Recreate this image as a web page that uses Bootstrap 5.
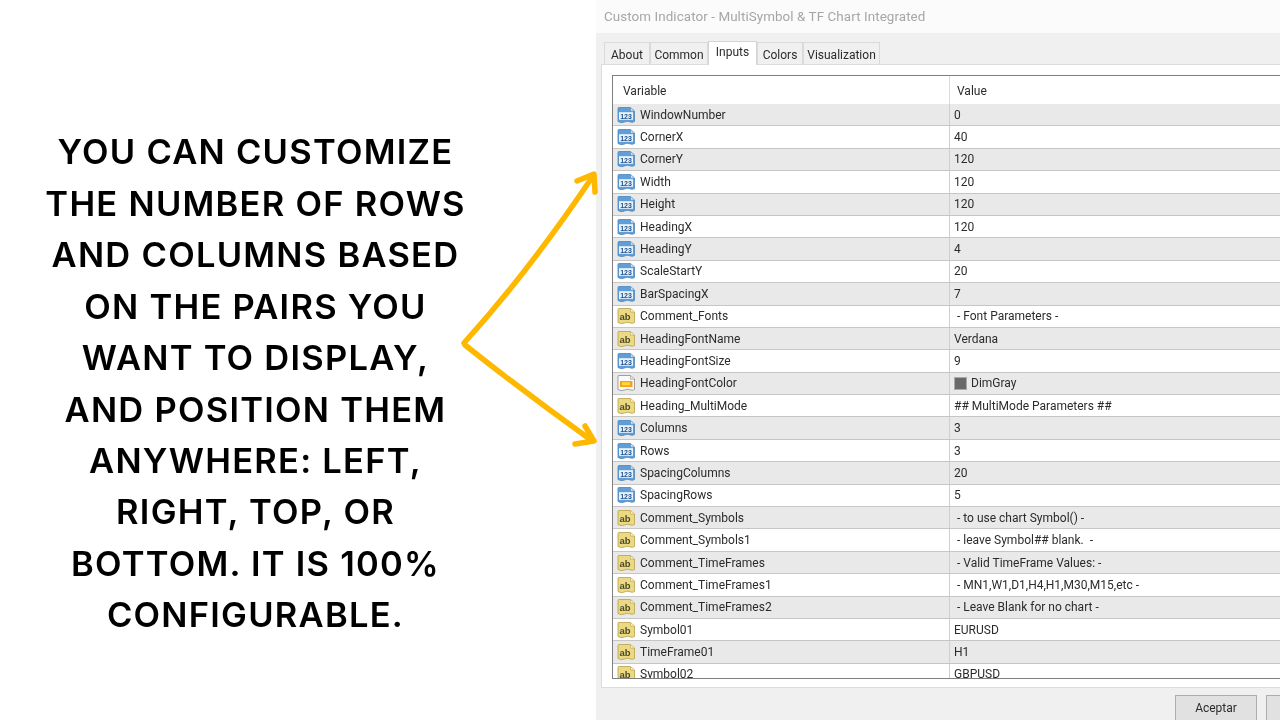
<!DOCTYPE html>
<html lang="en">
<head>
<meta charset="utf-8">
<title>MultiSymbol & TF Chart Integrated</title>
<link href="https://cdn.jsdelivr.net/npm/bootstrap@5.3.0/dist/css/bootstrap.min.css" rel="stylesheet">
<style>
html,body{height:720px;overflow:hidden;background:#fff}
.stage{width:1280px;height:720px;position:relative;overflow:hidden}
.pitch{width:596px;height:720px;padding:47px 85px 0 0;flex:none}
.pitch-text{margin:0;white-space:nowrap;font-family:"Inter",sans-serif;font-weight:600;font-size:34.5px;line-height:51.4px;color:#000;text-align:center;letter-spacing:1.25px;filter:blur(.3px)}
.arrows{position:absolute;left:440px;top:150px;width:170px;height:320px}
.dialog{width:684px;height:720px;background:#f0f0f0;overflow:hidden;font-family:"Roboto","Liberation Sans",sans-serif;font-size:12px;color:#2b2b2b;filter:blur(.4px)}
.dlg-title{height:33px;flex:none;background:#fbfbfb;padding:8px 0 0 8px;font-size:13.4px;color:#a6a6a6;letter-spacing:.08px;line-height:18px}
.dlg-tabs{height:31px;flex:none;padding:9px 0 0 8px;border:0;flex-wrap:nowrap;align-items:flex-end}
.dlg-tabs .nav-link{height:22px;padding:4px 0 0;text-align:center;border:1px solid #dadada;border-bottom:0;border-radius:0;background:#f0f0f0;color:#2b2b2b;line-height:16px;white-space:nowrap}
.dlg-tabs .nav-item:nth-child(1) .nav-link{width:46px}
.dlg-tabs .nav-item:nth-child(2) .nav-link{width:58px}
.dlg-tabs .nav-item:nth-child(3) .nav-link{width:49px}
.dlg-tabs .nav-item:nth-child(4) .nav-link{width:46px}
.dlg-tabs .nav-item:nth-child(5) .nav-link{width:77px}
.dlg-tabs .nav-link.active{height:24px;padding-top:2px;background:#fff;color:#2b2b2b;border-color:#d5d5d5;position:relative;z-index:1;margin-bottom:-1px}
.tab-sheet{height:624px;flex:none;margin-left:5px;background:#fff;border-top:1px solid #dcdcdc;border-left:1px solid #dcdcdc;border-bottom:1px solid #dcdcdc;padding:10px 0 0 10px}
.grid-frame{height:604px;border:1px solid #7f7f7f;border-right:0;overflow:hidden;background:#fff}
.grid-head{height:28px;flex:none;line-height:28px}
.grid-row{height:22.4px;flex:none;line-height:21px;border-bottom:1px solid #c6c6c6;background:#fff}
.grid-row.odd{background:#e9e9e9}
.cell-var{width:337px;flex:none;display:flex;align-items:center;padding:1px 0 0 4px;gap:4px;border-right:1px solid #cfcfcf;white-space:nowrap}
.grid-head .cell-var{padding-left:10px;border-right-color:#dcdcdc}
.cell-val{flex:1;padding:1px 0 0 4px;white-space:pre;display:flex;align-items:center;gap:4px}
.grid-head .cell-val{padding-left:7px}
.ic{width:19px;height:19px;flex:none}
.swatch{width:13px;height:13px;background:#696969;border:1px solid #aaa;flex:none}
.dlg-foot{flex:1;padding-top:7px;padding-left:579px;gap:9px}
.dlg-btn{width:82px;height:30px;flex:none;border:1px solid #adadad;background:#e1e1e1;border-radius:0;padding:0 0 4px;font-size:12px;color:#2b2b2b;line-height:18px}
.dlg-btn:hover{background:#e1e1e1;border-color:#adadad}
</style>
</head>
<body>
<svg width="0" height="0" class="d-block" aria-hidden="true">
<defs>
<symbol id="ic-num" viewBox="0 0 19 19">
<path d="M1 2.500Q1 1.500 2 1.500H13.500L17.500 5V15.500Q15.500 17 13 15.800Q10 14.500 7.500 16Q4 17.500 1 15.500Z" fill="#5f9ed8" stroke="#4a86bd" stroke-width=".8"/>
<path d="M13.500 1.800V5.200H17.300" fill="#d6e7f6" stroke="#4a86bd" stroke-width=".6"/>
<rect x="2" y="6.200" width="14" height="7.600" fill="#eaf3fb"/>
<text x="9" y="12.700" text-anchor="middle" font-family="Liberation Sans,sans-serif" font-weight="700" font-size="7" fill="#1f4e86">123</text>
</symbol>
<symbol id="ic-str" viewBox="0 0 19 19">
<path d="M1 2.500Q1 1.500 2 1.500H13.500L17.500 5V15.500Q15.500 17 13 15.800Q10 14.500 7.500 16Q4 17.500 1 15.500Z" fill="#ecd983" stroke="#b8a04a" stroke-width=".8"/>
<path d="M13.500 1.800V5.200H17.300" fill="#fbf3c8" stroke="#b8a04a" stroke-width=".6"/>
<text x="8" y="12.800" text-anchor="middle" font-family="Liberation Sans,sans-serif" font-weight="700" font-size="9.500" fill="#4a4a2a">ab</text>
</symbol>
<symbol id="ic-col" viewBox="0 0 19 19">
<path d="M1 2.500Q1 1.500 2 1.500H13.500L17.500 5V15.500Q15.500 17 13 15.800Q10 14.500 7.500 16Q4 17.500 1 15.500Z" fill="#fafafa" stroke="#8a8a8a" stroke-width=".8"/>
<path d="M13.500 1.800V5.200H17.300" fill="#eee" stroke="#8a8a8a" stroke-width=".6"/>
<rect x="3" y="7" width="12.500" height="6" fill="#f7a11a"/>
<rect x="5" y="8.300" width="8" height="3" fill="#ffd83a"/>
</symbol>
</defs>
</svg>
<div class="stage d-flex">
  <div class="pitch d-flex align-items-center justify-content-center">
    <p class="pitch-text">YOU CAN CUSTOMIZE<br>THE NUMBER OF ROWS<br>AND COLUMNS BASED<br>ON THE PAIRS YOU<br>WANT TO DISPLAY,<br>AND POSITION THEM<br>ANYWHERE: LEFT,<br>RIGHT, TOP, OR<br>BOTTOM. IT IS 100%<br>CONFIGURABLE.</p>
  </div>
  <div class="dialog d-flex flex-column">
    <div class="dlg-title">Custom Indicator - MultiSymbol &amp; TF Chart Integrated</div>
    <ul class="nav dlg-tabs">
      <li class="nav-item"><a class="nav-link" href="#">About</a></li>
      <li class="nav-item"><a class="nav-link" href="#">Common</a></li>
      <li class="nav-item"><a class="nav-link active" href="#">Inputs</a></li>
      <li class="nav-item"><a class="nav-link" href="#">Colors</a></li>
      <li class="nav-item"><a class="nav-link" href="#">Visualization</a></li>
    </ul>
    <div class="tab-sheet">
      <div class="grid-frame d-flex flex-column">
        <div class="grid-head d-flex"><div class="cell-var">Variable</div><div class="cell-val">Value</div></div>
        <div class="grid-row odd d-flex"><div class="cell-var"><svg class="ic"><use href="#ic-num"/></svg>WindowNumber</div><div class="cell-val">0</div></div>
        <div class="grid-row d-flex"><div class="cell-var"><svg class="ic"><use href="#ic-num"/></svg>CornerX</div><div class="cell-val">40</div></div>
        <div class="grid-row odd d-flex"><div class="cell-var"><svg class="ic"><use href="#ic-num"/></svg>CornerY</div><div class="cell-val">120</div></div>
        <div class="grid-row d-flex"><div class="cell-var"><svg class="ic"><use href="#ic-num"/></svg>Width</div><div class="cell-val">120</div></div>
        <div class="grid-row odd d-flex"><div class="cell-var"><svg class="ic"><use href="#ic-num"/></svg>Height</div><div class="cell-val">120</div></div>
        <div class="grid-row d-flex"><div class="cell-var"><svg class="ic"><use href="#ic-num"/></svg>HeadingX</div><div class="cell-val">120</div></div>
        <div class="grid-row odd d-flex"><div class="cell-var"><svg class="ic"><use href="#ic-num"/></svg>HeadingY</div><div class="cell-val">4</div></div>
        <div class="grid-row d-flex"><div class="cell-var"><svg class="ic"><use href="#ic-num"/></svg>ScaleStartY</div><div class="cell-val">20</div></div>
        <div class="grid-row odd d-flex"><div class="cell-var"><svg class="ic"><use href="#ic-num"/></svg>BarSpacingX</div><div class="cell-val">7</div></div>
        <div class="grid-row d-flex"><div class="cell-var"><svg class="ic"><use href="#ic-str"/></svg>Comment_Fonts</div><div class="cell-val"> - Font Parameters -</div></div>
        <div class="grid-row odd d-flex"><div class="cell-var"><svg class="ic"><use href="#ic-str"/></svg>HeadingFontName</div><div class="cell-val">Verdana</div></div>
        <div class="grid-row d-flex"><div class="cell-var"><svg class="ic"><use href="#ic-num"/></svg>HeadingFontSize</div><div class="cell-val">9</div></div>
        <div class="grid-row odd d-flex"><div class="cell-var"><svg class="ic"><use href="#ic-col"/></svg>HeadingFontColor</div><div class="cell-val"><span class="swatch"></span>DimGray</div></div>
        <div class="grid-row d-flex"><div class="cell-var"><svg class="ic"><use href="#ic-str"/></svg>Heading_MultiMode</div><div class="cell-val">## MultiMode Parameters ##</div></div>
        <div class="grid-row odd d-flex"><div class="cell-var"><svg class="ic"><use href="#ic-num"/></svg>Columns</div><div class="cell-val">3</div></div>
        <div class="grid-row d-flex"><div class="cell-var"><svg class="ic"><use href="#ic-num"/></svg>Rows</div><div class="cell-val">3</div></div>
        <div class="grid-row odd d-flex"><div class="cell-var"><svg class="ic"><use href="#ic-num"/></svg>SpacingColumns</div><div class="cell-val">20</div></div>
        <div class="grid-row d-flex"><div class="cell-var"><svg class="ic"><use href="#ic-num"/></svg>SpacingRows</div><div class="cell-val">5</div></div>
        <div class="grid-row odd d-flex"><div class="cell-var"><svg class="ic"><use href="#ic-str"/></svg>Comment_Symbols</div><div class="cell-val"> - to use chart Symbol() -</div></div>
        <div class="grid-row d-flex"><div class="cell-var"><svg class="ic"><use href="#ic-str"/></svg>Comment_Symbols1</div><div class="cell-val"> - leave Symbol## blank.  -</div></div>
        <div class="grid-row odd d-flex"><div class="cell-var"><svg class="ic"><use href="#ic-str"/></svg>Comment_TimeFrames</div><div class="cell-val"> - Valid TimeFrame Values: -</div></div>
        <div class="grid-row d-flex"><div class="cell-var"><svg class="ic"><use href="#ic-str"/></svg>Comment_TimeFrames1</div><div class="cell-val"> - MN1,W1,D1,H4,H1,M30,M15,etc -</div></div>
        <div class="grid-row odd d-flex"><div class="cell-var"><svg class="ic"><use href="#ic-str"/></svg>Comment_TimeFrames2</div><div class="cell-val"> - Leave Blank for no chart -</div></div>
        <div class="grid-row d-flex"><div class="cell-var"><svg class="ic"><use href="#ic-str"/></svg>Symbol01</div><div class="cell-val">EURUSD</div></div>
        <div class="grid-row odd d-flex"><div class="cell-var"><svg class="ic"><use href="#ic-str"/></svg>TimeFrame01</div><div class="cell-val">H1</div></div>
        <div class="grid-row d-flex"><div class="cell-var"><svg class="ic"><use href="#ic-str"/></svg>Symbol02</div><div class="cell-val">GBPUSD</div></div>
      </div>
    </div>
    <div class="dlg-foot d-flex">
      <button type="button" class="btn dlg-btn">Aceptar</button>
      <button type="button" class="btn dlg-btn"></button>
    </div>
  </div>
  <svg class="arrows" viewBox="440 150 170 320" fill="none" stroke="#ffb800" stroke-width="5.5" stroke-linecap="round" stroke-linejoin="round">
    <path d="M464 343Q530 270 593 176"/>
    <path d="M577 181L594 174L595 192"/>
    <path d="M465 345Q524 392 591 440"/>
    <path d="M585 426L594 441L575 444"/>
  </svg>
</div>
</body>
</html>
